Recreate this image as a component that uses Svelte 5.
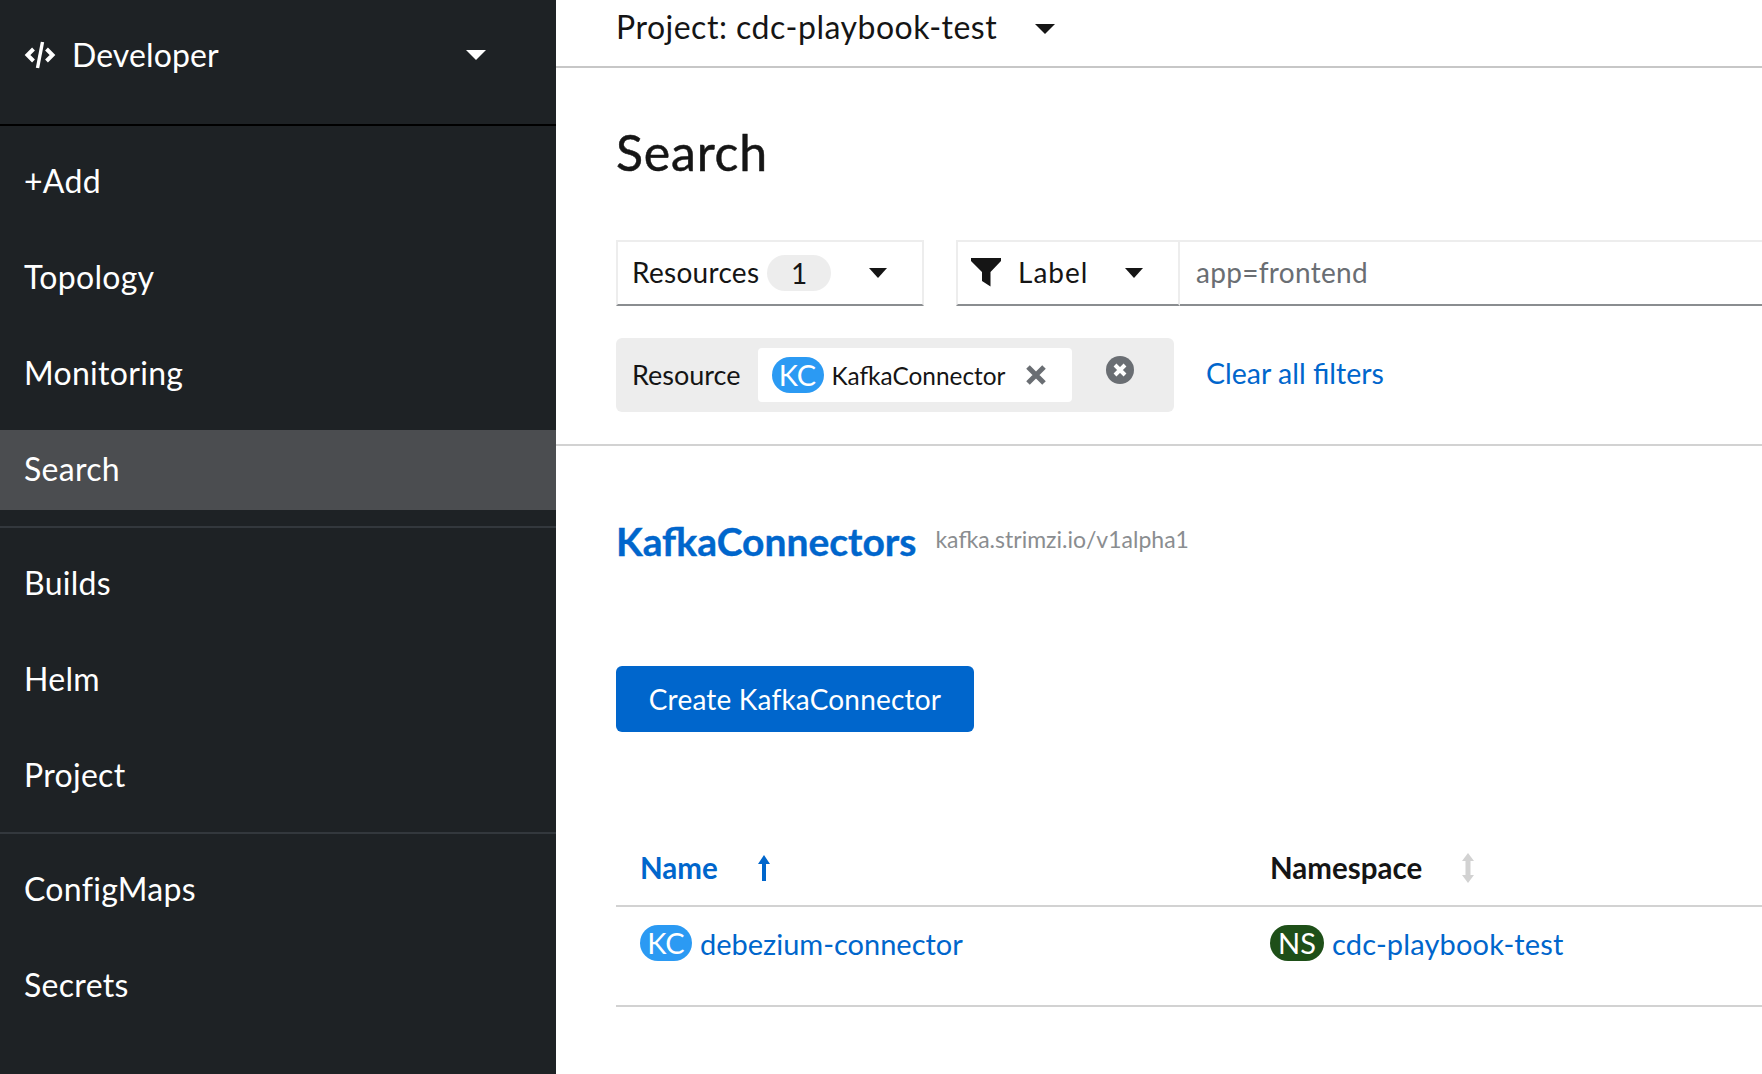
<script>
    const navGroups = [
        ["+Add", "Topology", "Monitoring", "Search"],
        ["Builds", "Helm", "Project"],
        ["ConfigMaps", "Secrets"],
    ];
</script>

<div class="layout">
    <aside class="sidebar">
        <div class="perspective">
            <svg class="code-icon" viewBox="0 0 32 28" width="32" height="28">
                <path d="M9.5 8 L3.5 14 L9.5 20 M22.5 8 L28.5 14 L22.5 20" fill="none" stroke="#fff" stroke-width="4"/>
                <path d="M18.5 1 L13.5 27" fill="none" stroke="#fff" stroke-width="3.4"/>
            </svg>
            <span class="perspective-name">Developer</span>
            <span class="caret light"></span>
        </div>
        {#each navGroups as group, i}
            <nav class="group" class:ruled={i > 0}>
                {#each group as item}
                    <div class="item" class:active={item === "Search"}>{item}</div>
                {/each}
            </nav>
        {/each}
    </aside>

    <main class="content">
        <div class="projectbar">
            <span>Project: cdc-playbook-test</span>
            <span class="caret dark"></span>
        </div>

        <section class="search">
            <h1>Search</h1>
            <div class="toolbar">
                <div class="select resources">
                    <span>Resources</span>
                    <span class="count">1</span>
                    <span class="caret small"></span>
                </div>
                <div class="select label">
                    <svg viewBox="0 0 30 30" width="30" height="30">
                        <path d="M0 1 H30 V4 L19.5 15 V29.5 L11 24 V15 L0 4 Z" fill="#151515"/>
                    </svg>
                    <span class="label-text">Label</span>
                    <span class="caret small"></span>
                </div>
                <div class="filter-input">app=frontend</div>
            </div>
            <div class="chips">
                <div class="chip-group">
                    <span class="chip-name">Resource</span>
                    <div class="chip">
                        <span class="badge kc">KC</span>
                        <span>KafkaConnector</span>
                        <svg class="x" viewBox="0 0 20 20" width="20" height="20">
                            <path d="M2 2 L18 18 M18 2 L2 18" stroke="#6a6e73" stroke-width="5" fill="none"/>
                        </svg>
                    </div>
                    <svg class="x-circle" viewBox="0 0 28 28" width="28" height="28">
                        <circle cx="14" cy="14" r="14" fill="#6a6e73"/>
                        <path d="M9 9 L19 19 M19 9 L9 19" stroke="#fff" stroke-width="4" fill="none"/>
                    </svg>
                </div>
                <a class="link clear" href="#top">Clear all filters</a>
            </div>
        </section>

        <section class="results">
            <div class="resource-title">
                <a class="kind" href="#top">KafkaConnectors</a>
                <span class="api">kafka.strimzi.io/v1alpha1</span>
            </div>
            <button class="create">Create KafkaConnector</button>
            <div class="table">
                <div class="row head">
                    <div class="cell name sorted">
                        <span>Name</span>
                        <svg viewBox="0 0 14 28" width="14" height="28">
                            <path d="M7 1 L13 10 H9 V27 H5 V10 H1 Z" fill="#06c"/>
                        </svg>
                    </div>
                    <div class="cell">
                        <span>Namespace</span>
                        <svg viewBox="0 0 14 30" width="14" height="30">
                            <path d="M7 0 L13 8 H9.5 V22 H13 L7 30 L1 22 H4.5 V8 H1 Z" fill="#d2d2d2"/>
                        </svg>
                    </div>
                </div>
                <div class="row body">
                    <div class="cell name">
                        <span class="badge kc">KC</span>
                        <a class="link" href="#top">debezium-connector</a>
                    </div>
                    <div class="cell">
                        <span class="badge ns">NS</span>
                        <a class="link ns-link" href="#top">cdc-playbook-test</a>
                    </div>
                </div>
            </div>
        </section>
    </main>
</div>

<style>
    :global(body) {
        margin: 0;
        overflow: hidden;
        font-family: Lato, "Open Sans", sans-serif;
        color: #151515;
    }

    .layout {
        display: flex;
        height: 1074px;
        width: 1762px;
        overflow: hidden;
    }

    .sidebar {
        flex: 0 0 556px;
        background: #1e2225;
        color: #fff;
        font-size: 32px;
        letter-spacing: 0.3px;
    }

    .perspective {
        display: flex;
        align-items: center;
        padding: 0 70px 15px 24px;
        box-sizing: border-box;
        border-bottom: 2px solid #000;
        height: 126px;
    }

    .code-icon {
        margin-right: 16px;
    }

    .perspective-name {
        flex: 1;
        letter-spacing: 0.1px;
    }

    .group {
        display: flex;
        flex-direction: column;
        gap: 16px;
        padding: 16px 0;
    }

    .ruled {
        border-top: 2px solid #33383d;
    }

    .item {
        height: 80px;
        line-height: 78px;
        padding-left: 24px;
    }

    .active {
        background: #4b4d50;
    }

    .caret {
        display: inline-block;
        width: 0;
        height: 0;
        border-left: 10px solid transparent;
        border-right: 10px solid transparent;
    }

    .caret.light {
        border-top: 10px solid #fff;
    }

    .caret.dark {
        border-top: 10px solid #151515;
        margin-top: 5px;
    }

    .caret.small {
        border-left-width: 9px;
        border-right-width: 9px;
        border-top: 10px solid #151515;
        margin-top: 2px;
    }

    .content {
        flex: 1;
        min-width: 0;
    }

    .projectbar {
        display: flex;
        align-items: center;
        gap: 38px;
        padding: 0 0 14px 60px;
        box-sizing: border-box;
        border-bottom: 2px solid #c7c7c7;
        height: 68px;
        font-size: 32px;
        letter-spacing: 0.5px;
    }

    .search {
        padding: 0 0 32px 60px;
        border-bottom: 2px solid #d2d2d2;
    }

    h1 {
        margin: 0;
        padding-top: 51px;
        height: 120px;
        box-sizing: border-box;
        font-size: 50px;
        line-height: 66px;
        font-weight: 400;
        letter-spacing: 0.8px;
        -webkit-text-stroke: 0.5px #151515;
    }

    .toolbar {
        display: flex;
        margin-top: 52px;
        height: 66px;
        font-size: 28px;
        line-height: 32px;
        letter-spacing: 0.3px;
    }

    .select {
        display: flex;
        align-items: center;
        box-sizing: border-box;
        padding-bottom: 2px;
        border: 2px solid #ededed;
        border-bottom-color: #8a8d90;
    }

    .resources {
        width: 308px;
        padding: 0 35px 2px 14px;
    }

    .count {
        width: 64px;
        margin: 2px 0 0 8px;
        line-height: 36px;
        border-radius: 18px;
        background: #ededed;
        text-align: center;
    }

    .resources .caret {
        margin-left: auto;
    }

    .label {
        margin-left: 32px;
        width: 224px;
        padding: 0 35px 2px 14px;
        gap: 17px;
    }

    .label svg {
        margin-left: -1px;
    }

    .label-text {
        letter-spacing: 1px;
    }

    .label .caret {
        margin-left: auto;
    }

    .filter-input {
        flex: 1;
        display: flex;
        align-items: center;
        padding: 0 0 2px 16px;
        color: #6a6e73;
        border-top: 2px solid #ededed;
        border-bottom: 2px solid #8a8d90;
    }

    .chips {
        display: flex;
        align-items: center;
        gap: 32px;
        margin-top: 32px;
    }

    .chip-group {
        display: flex;
        align-items: center;
        box-sizing: border-box;
        width: 558px;
        height: 74px;
        padding-left: 16px;
        background: #ededed;
        border-radius: 6px;
        font-size: 27px;
    }

    .chip-name {
        margin-top: -1px;
    }

    .chip {
        display: flex;
        align-items: center;
        gap: 8px;
        box-sizing: border-box;
        width: 314px;
        height: 54px;
        margin-left: 17px;
        padding-left: 14px;
        background: #fff;
        border-radius: 4px;
        font-size: 24.4px;
    }

    .x {
        margin-left: 13px;
    }

    .x-circle {
        margin-left: 34px;
        margin-bottom: 10px;
    }

    .badge {
        display: inline-block;
        flex: none;
        min-width: 52px;
        box-sizing: border-box;
        line-height: 36px;
        border-radius: 18px;
        text-align: center;
        color: #fff;
        font-size: 29px;
    }

    .kc {
        background: #2b9af3;
    }

    .ns {
        min-width: 54px;
        background: #1e4f18;
    }

    .link {
        color: #06c;
        text-decoration: none;
    }

    .ns-link {
        letter-spacing: 0.15px;
    }

    .clear {
        font-size: 28.5px;
        margin-top: -4px;
    }

    .results {
        padding: 0 0 0 60px;
    }

    .resource-title {
        display: flex;
        align-items: center;
        gap: 19px;
        margin-top: 65px;
        line-height: 56px;
    }

    .kind {
        color: #06c;
        text-decoration: none;
        font-weight: 700;
        font-size: 39px;
        -webkit-text-stroke: 0.4px #06c;
    }

    .api {
        margin-bottom: 3px;
        color: #8a8d90;
        font-size: 23px;
    }

    .create {
        display: block;
        width: 358px;
        height: 66px;
        margin-top: 96px;
        border: none;
        border-radius: 6px;
        background: #06c;
        color: #fff;
        font: inherit;
        font-size: 28px;
        letter-spacing: 0.2px;
    }

    .table {
        margin-top: 100px;
    }

    .row {
        display: flex;
        align-items: center;
        box-sizing: border-box;
        padding-left: 24px;
        border-bottom: 2px solid #d2d2d2;
    }

    .head {
        height: 75px;
        padding-bottom: 2px;
        font-weight: 700;
        font-size: 29.5px;
    }

    .body {
        height: 100px;
        padding-bottom: 26px;
        font-size: 29px;
    }

    .cell {
        display: flex;
        align-items: center;
        gap: 8px;
    }

    .cell.name {
        width: 630px;
    }

    .head .cell {
        gap: 39px;
    }

    .sorted {
        color: #06c;
    }
</style>
